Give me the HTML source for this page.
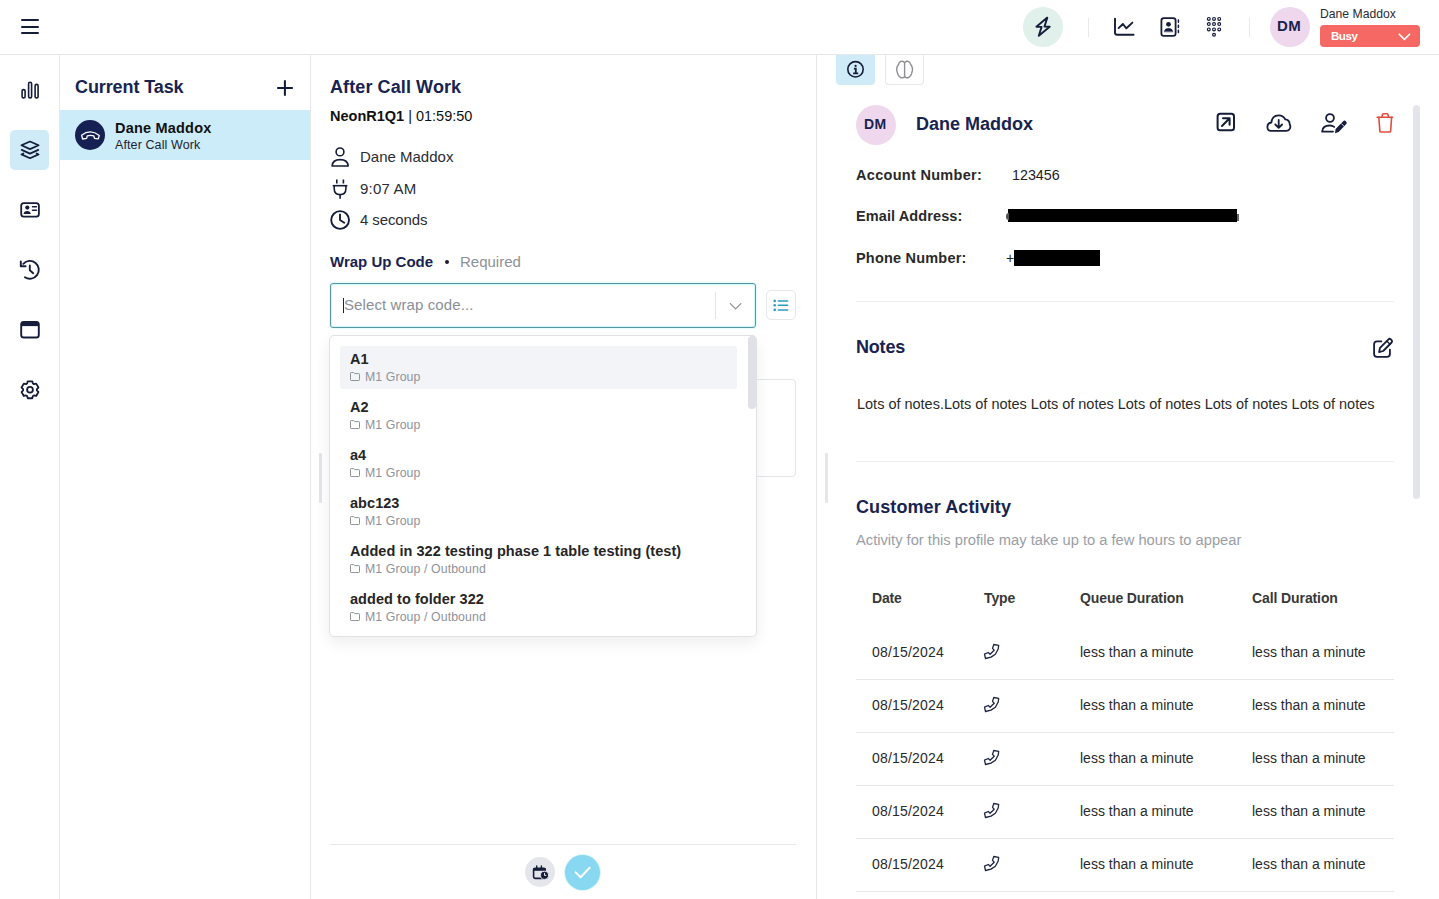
<!DOCTYPE html>
<html><head><meta charset="utf-8">
<style>
*{box-sizing:border-box;margin:0;padding:0}
html,body{width:1439px;height:899px;overflow:hidden;background:#fff;font-family:"Liberation Sans",sans-serif;color:#222}
.a{position:absolute}
.t{position:absolute;white-space:nowrap;line-height:1}
.nv{color:#182350}
svg{position:absolute;overflow:visible}
</style></head><body>

<!-- ===== TOP BAR ===== -->
<div class="a" style="left:0;top:54px;width:1439px;height:1px;background:#e6e7ea"></div>
<!-- hamburger -->
<div class="a" style="left:21px;top:19px;width:18px;height:2px;background:#161d3a;border-radius:1px"></div>
<div class="a" style="left:21px;top:26px;width:18px;height:2px;background:#161d3a;border-radius:1px"></div>
<div class="a" style="left:21px;top:32px;width:18px;height:2px;background:#161d3a;border-radius:1px"></div>


<!-- top bar right -->
<div class="a" style="left:1023px;top:7px;width:40px;height:40px;border-radius:50%;background:#dff1ea"></div>
<div class="a" style="left:1088px;top:18px;width:1px;height:19px;background:#e8e9ec"></div>
<div class="a" style="left:1249px;top:18px;width:1px;height:19px;background:#e8e9ec"></div>
<div class="a" style="left:1270px;top:7px;width:40px;height:40px;border-radius:50%;background:#efd8ee"></div>
<div class="t nv" style="left:1277px;top:18px;font-size:15px;font-weight:700;letter-spacing:0.4px">DM</div>
<div class="t" style="left:1320px;top:8px;font-size:12.2px;color:#2a2d35">Dane Maddox</div>
<div class="a" style="left:1320px;top:25px;width:100px;height:22px;border-radius:4px;background:#f56863"></div>
<div class="t" style="left:1331px;top:30px;font-size:11.6px;font-weight:700;color:#fff;letter-spacing:-0.5px">Busy</div>
<svg style="left:0;top:0" width="1439" height="60" viewBox="0 0 1439 60" fill="none" stroke-linecap="round" stroke-linejoin="round">
 <path d="M1047.3 17.6 L1036.4 26.7 L1041.6 26.9 L1038.8 35.8 L1049.7 26.7 L1044.5 26.5 Z" stroke="#161d3a" stroke-width="1.9"/>
 <path d="M1115 18.6 V32.4 Q1115 34.7 1117.3 34.7 H1133.6" stroke="#161d3a" stroke-width="1.9"/>
 <path d="M1118.6 28.1 L1122.9 24 L1126.4 28.3 L1132.4 22.6" stroke="#161d3a" stroke-width="1.9"/>
 <rect x="1161.4" y="18.1" width="14.2" height="17.8" rx="2.4" stroke="#161d3a" stroke-width="1.8"/>
 <circle cx="1168.5" cy="24.3" r="2.4" fill="#161d3a"/>
 <path d="M1164.3 31.5 Q1164.8 28.3 1168.5 28.3 Q1172.3 28.3 1172.8 31.5 Z" fill="#161d3a" stroke="#161d3a" stroke-width="0.5"/>
 <path d="M1178.4 20 V22.3 M1178.4 25.2 V27.5 M1178.4 30.2 V32.5" stroke="#161d3a" stroke-width="1.5"/>
 <g stroke="#161d3a" stroke-width="1.2">
  <circle cx="1208.8" cy="18.9" r="1.4"/><circle cx="1214" cy="18.9" r="1.4"/><circle cx="1219.2" cy="18.9" r="1.4"/>
  <circle cx="1208.8" cy="24.1" r="1.4"/><circle cx="1214" cy="24.1" r="1.4"/><circle cx="1219.2" cy="24.1" r="1.4"/>
  <circle cx="1208.8" cy="29.4" r="1.4"/><circle cx="1214" cy="29.4" r="1.4"/><circle cx="1219.2" cy="29.4" r="1.4"/>
  <circle cx="1214" cy="34.7" r="1.4"/>
 </g>
 <path d="M1399.2 34.2 L1404.4 39.4 L1409.6 34.2" stroke="#fff" stroke-width="1.6"/>
</svg>

<!-- ===== LEFT NAV ===== -->
<div class="a" style="left:59px;top:55px;width:1px;height:844px;background:#e6e7ea"></div>
<div class="a" style="left:10px;top:130px;width:39px;height:40px;background:#cfebf8;border-radius:5px"></div>

<!-- ===== TASK PANEL ===== -->
<div class="a" style="left:310px;top:55px;width:1px;height:844px;background:#e6e7ea"></div>
<div class="t nv" style="left:75px;top:78px;font-size:18px;font-weight:700;letter-spacing:-0.1px">Current Task</div>
<svg style="left:0;top:0" width="320" height="110" viewBox="0 0 320 110" fill="none"><path d="M284.9 80.2 V95.8 M277.2 88 H292.8" stroke="#0f1838" stroke-width="2"/></svg>
<div class="a" style="left:60px;top:110px;width:250px;height:50px;background:#cdecf9"></div>
<div class="a" style="left:75px;top:120px;width:30px;height:30px;border-radius:50%;background:#152153"></div>
<div class="t" style="left:115px;top:121px;font-size:14.5px;font-weight:700;color:#111;letter-spacing:0.2px">Dane Maddox</div>
<div class="t" style="left:115px;top:139px;font-size:12.5px;color:#1c2230;letter-spacing:0.1px">After Call Work</div>

<!-- ===== MIDDLE PANEL ===== -->
<div class="a" style="left:816px;top:55px;width:1px;height:844px;background:#e6e7ea"></div>
<div class="a" style="left:319px;top:453px;width:3px;height:50px;background:#e3e5ea;border-radius:1px"></div>
<div class="a" style="left:825px;top:453px;width:3px;height:50px;background:#e3e5ea;border-radius:1px"></div>

<div class="t nv" style="left:330px;top:78px;font-size:18px;font-weight:700;letter-spacing:0.1px">After Call Work</div>
<div class="t" style="left:330px;top:109px;font-size:14.5px;color:#111;letter-spacing:0px"><b>NeonR1Q1</b> | 01:59:50</div>

<div class="t" style="left:360px;top:149px;font-size:15px;color:#2a2d35">Dane Maddox</div>
<div class="t" style="left:360px;top:181px;font-size:15px;color:#2a2d35;letter-spacing:0.2px">9:07 AM</div>
<div class="t" style="left:360px;top:212px;font-size:15px;color:#2a2d35;letter-spacing:-0.1px">4 seconds</div>

<div class="t nv" style="left:330px;top:254px;font-size:15px;font-weight:700">Wrap Up Code</div>
<div class="a" style="left:445px;top:260px;width:4px;height:4px;border-radius:50%;background:#1a1d2a"></div>
<div class="t" style="left:460px;top:254px;font-size:15px;color:#8d9199">Required</div>

<!-- notes textarea (behind dropdown) -->
<div class="a" style="left:330px;top:379px;width:466px;height:98px;border:1px solid #e4e6ea;border-radius:4px"></div>

<!-- input -->
<div class="a" style="left:330px;top:283px;width:426px;height:45px;border:1px solid #5a949f;border-radius:3px;box-shadow:inset 0 0 0 1px rgba(195,248,255,0.9),0 0 0 1px rgba(215,250,255,0.6)"></div>
<div class="a" style="left:343px;top:298px;width:1px;height:15px;background:#222"></div>
<div class="t" style="left:344px;top:297px;font-size:15px;color:#8a8f96;letter-spacing:0.1px">Select wrap code...</div>
<div class="a" style="left:715px;top:292px;width:1px;height:27px;background:#e3e4e7"></div>
<div class="a" style="left:766px;top:290px;width:30px;height:30px;border:1px solid #e6e7ea;border-radius:5px"></div>

<!-- dropdown -->
<div class="a" style="left:329px;top:335px;width:428px;height:302px;border:1px solid #e0e1e4;border-radius:5px;background:#fff;box-shadow:0 6px 16px rgba(0,0,0,0.07)"></div>
<div class="a" style="left:748px;top:336px;width:8px;height:73px;background:#dfe1e6;border-radius:4px"></div>
<div class="a" style="left:340px;top:346px;width:397px;height:43px;background:#f3f4f8;border-radius:3px"></div>

<div class="t" style="left:350px;top:352px;font-size:14.5px;font-weight:700;color:#262626;letter-spacing:0.05px">A1</div>
<svg style="left:350px;top:372px" width="10" height="9" viewBox="0 0 10 9"><path d="M0.5 1.2 Q0.5 0.5 1.2 0.5 H3.6 L4.6 1.6 H8.8 Q9.5 1.6 9.5 2.3 V7.8 Q9.5 8.5 8.8 8.5 H1.2 Q0.5 8.5 0.5 7.8 Z" fill="none" stroke="#8f939a" stroke-width="1"/></svg>
<div class="t" style="left:365px;top:371px;font-size:12.3px;color:#8f939a;letter-spacing:0.1px">M1 Group</div>
<div class="t" style="left:350px;top:400px;font-size:14.5px;font-weight:700;color:#262626;letter-spacing:0.05px">A2</div>
<svg style="left:350px;top:420px" width="10" height="9" viewBox="0 0 10 9"><path d="M0.5 1.2 Q0.5 0.5 1.2 0.5 H3.6 L4.6 1.6 H8.8 Q9.5 1.6 9.5 2.3 V7.8 Q9.5 8.5 8.8 8.5 H1.2 Q0.5 8.5 0.5 7.8 Z" fill="none" stroke="#8f939a" stroke-width="1"/></svg>
<div class="t" style="left:365px;top:419px;font-size:12.3px;color:#8f939a;letter-spacing:0.1px">M1 Group</div>
<div class="t" style="left:350px;top:448px;font-size:14.5px;font-weight:700;color:#262626;letter-spacing:0.05px">a4</div>
<svg style="left:350px;top:468px" width="10" height="9" viewBox="0 0 10 9"><path d="M0.5 1.2 Q0.5 0.5 1.2 0.5 H3.6 L4.6 1.6 H8.8 Q9.5 1.6 9.5 2.3 V7.8 Q9.5 8.5 8.8 8.5 H1.2 Q0.5 8.5 0.5 7.8 Z" fill="none" stroke="#8f939a" stroke-width="1"/></svg>
<div class="t" style="left:365px;top:467px;font-size:12.3px;color:#8f939a;letter-spacing:0.1px">M1 Group</div>
<div class="t" style="left:350px;top:496px;font-size:14.5px;font-weight:700;color:#262626;letter-spacing:0.05px">abc123</div>
<svg style="left:350px;top:516px" width="10" height="9" viewBox="0 0 10 9"><path d="M0.5 1.2 Q0.5 0.5 1.2 0.5 H3.6 L4.6 1.6 H8.8 Q9.5 1.6 9.5 2.3 V7.8 Q9.5 8.5 8.8 8.5 H1.2 Q0.5 8.5 0.5 7.8 Z" fill="none" stroke="#8f939a" stroke-width="1"/></svg>
<div class="t" style="left:365px;top:515px;font-size:12.3px;color:#8f939a;letter-spacing:0.1px">M1 Group</div>
<div class="t" style="left:350px;top:544px;font-size:14.5px;font-weight:700;color:#262626;letter-spacing:0.05px">Added in 322 testing phase 1 table testing (test)</div>
<svg style="left:350px;top:564px" width="10" height="9" viewBox="0 0 10 9"><path d="M0.5 1.2 Q0.5 0.5 1.2 0.5 H3.6 L4.6 1.6 H8.8 Q9.5 1.6 9.5 2.3 V7.8 Q9.5 8.5 8.8 8.5 H1.2 Q0.5 8.5 0.5 7.8 Z" fill="none" stroke="#8f939a" stroke-width="1"/></svg>
<div class="t" style="left:365px;top:563px;font-size:12.3px;color:#8f939a;letter-spacing:0.1px">M1 Group / Outbound</div>
<div class="t" style="left:350px;top:592px;font-size:14.5px;font-weight:700;color:#262626;letter-spacing:0.05px">added to folder 322</div>
<svg style="left:350px;top:612px" width="10" height="9" viewBox="0 0 10 9"><path d="M0.5 1.2 Q0.5 0.5 1.2 0.5 H3.6 L4.6 1.6 H8.8 Q9.5 1.6 9.5 2.3 V7.8 Q9.5 8.5 8.8 8.5 H1.2 Q0.5 8.5 0.5 7.8 Z" fill="none" stroke="#8f939a" stroke-width="1"/></svg>
<div class="t" style="left:365px;top:611px;font-size:12.3px;color:#8f939a;letter-spacing:0.1px">M1 Group / Outbound</div>

<!-- bottom -->
<div class="a" style="left:330px;top:844px;width:466px;height:1px;background:#e6e7ea"></div>
<div class="a" style="left:525px;top:857px;width:30px;height:30px;border-radius:50%;background:#e4e6eb"></div>
<div class="a" style="left:565px;top:855px;width:35px;height:35px;border-radius:50%;background:#87d8f0;box-shadow:0 0 0 1px rgba(150,230,250,0.35)"></div>

<!-- ===== RIGHT PANEL ===== -->
<div class="a" style="left:836px;top:55px;width:39px;height:29.5px;background:#cfebf8;border-radius:0 0 4px 4px"></div>
<div class="a" style="left:885px;top:54px;width:39px;height:31px;border:1px solid #e6e7ea;border-top:none;border-radius:0 0 4px 4px"></div>

<div class="a" style="left:856px;top:105px;width:40px;height:40px;border-radius:50%;background:#efd8ee"></div>
<div class="t nv" style="left:864px;top:117px;font-size:14px;font-weight:700;letter-spacing:0.3px">DM</div>
<div class="t nv" style="left:916px;top:115px;font-size:18px;font-weight:700">Dane Maddox</div>

<div class="a" style="left:1413px;top:105px;width:7px;height:394px;background:#e3e5ea;border-radius:4px"></div>

<div class="t" style="left:856px;top:168px;font-size:14.5px;font-weight:700;color:#2a2a2a;letter-spacing:0.3px">Account Number:</div>
<div class="t" style="left:1012px;top:168px;font-size:14.3px;color:#222">123456</div>
<div class="t" style="left:856px;top:209px;font-size:14.5px;font-weight:700;color:#2a2a2a;letter-spacing:0.1px">Email Address:</div>
<div class="a" style="left:1008px;top:209px;width:229px;height:13px;background:#000"></div>
<div class="a" style="left:1006px;top:213px;width:3px;height:7px;border-radius:3px 0 0 3px;background:#555"></div>
<div class="a" style="left:1237px;top:214px;width:2px;height:7px;background:#666"></div>
<div class="t" style="left:856px;top:251px;font-size:14.5px;font-weight:700;color:#2a2a2a;letter-spacing:0.2px">Phone Number:</div>
<div class="t" style="left:1006px;top:251px;font-size:14px;color:#222">+</div>
<div class="a" style="left:1014px;top:250px;width:86px;height:16px;background:#000"></div>

<div class="a" style="left:856px;top:301px;width:538px;height:1px;background:#eceef0"></div>
<div class="t nv" style="left:856px;top:338px;font-size:18px;font-weight:700;letter-spacing:-0.2px">Notes</div>
<div class="t" style="left:857px;top:397px;font-size:14.5px;color:#2a2a2a;letter-spacing:-0.01px">Lots of notes.Lots of notes Lots of notes Lots of notes Lots of notes Lots of notes</div>
<div class="a" style="left:856px;top:461px;width:538px;height:1px;background:#eceef0"></div>

<div class="t nv" style="left:856px;top:498px;font-size:18px;font-weight:700;letter-spacing:0.1px">Customer Activity</div>
<div class="t" style="left:856px;top:533px;font-size:14.7px;color:#9a9ea6">Activity for this profile may take up to a few hours to appear</div>

<div class="t" style="left:872px;top:591px;font-size:14px;font-weight:700;color:#383838;letter-spacing:-0.2px">Date</div>
<div class="t" style="left:984px;top:591px;font-size:14px;font-weight:700;color:#383838;letter-spacing:-0.1px">Type</div>
<div class="t" style="left:1080px;top:591px;font-size:14px;font-weight:700;color:#383838;letter-spacing:-0.1px">Queue Duration</div>
<div class="t" style="left:1252px;top:591px;font-size:14px;font-weight:700;color:#383838;letter-spacing:-0.1px">Call Duration</div>
<div class="t" style="left:872px;top:645px;font-size:14px;color:#2a2a2a;letter-spacing:0.2px">08/15/2024</div>
<svg class="ph" style="left:984px;top:644px" width="16" height="16" viewBox="0 0 16 16"><path d="M9.8 0.5 L14.7 1.4 L14.2 5.0 L11.4 10.2 L7.0 13.1 L1.5 14.5 L0.5 10.2 L4.3 8.5 L6.1 10.2 L10.2 6.2 L8.5 4.4 Z" fill="none" stroke="#1e2545" stroke-width="1.3" stroke-linejoin="round"/></svg>
<div class="t" style="left:1080px;top:645px;font-size:14px;color:#2a2a2a">less than a minute</div>
<div class="t" style="left:1252px;top:645px;font-size:14px;color:#2a2a2a">less than a minute</div>
<div class="a" style="left:856px;top:679px;width:538px;height:1px;background:#e6e7ea"></div>
<div class="t" style="left:872px;top:698px;font-size:14px;color:#2a2a2a;letter-spacing:0.2px">08/15/2024</div>
<svg class="ph" style="left:984px;top:697px" width="16" height="16" viewBox="0 0 16 16"><path d="M9.8 0.5 L14.7 1.4 L14.2 5.0 L11.4 10.2 L7.0 13.1 L1.5 14.5 L0.5 10.2 L4.3 8.5 L6.1 10.2 L10.2 6.2 L8.5 4.4 Z" fill="none" stroke="#1e2545" stroke-width="1.3" stroke-linejoin="round"/></svg>
<div class="t" style="left:1080px;top:698px;font-size:14px;color:#2a2a2a">less than a minute</div>
<div class="t" style="left:1252px;top:698px;font-size:14px;color:#2a2a2a">less than a minute</div>
<div class="a" style="left:856px;top:732px;width:538px;height:1px;background:#e6e7ea"></div>
<div class="t" style="left:872px;top:751px;font-size:14px;color:#2a2a2a;letter-spacing:0.2px">08/15/2024</div>
<svg class="ph" style="left:984px;top:750px" width="16" height="16" viewBox="0 0 16 16"><path d="M9.8 0.5 L14.7 1.4 L14.2 5.0 L11.4 10.2 L7.0 13.1 L1.5 14.5 L0.5 10.2 L4.3 8.5 L6.1 10.2 L10.2 6.2 L8.5 4.4 Z" fill="none" stroke="#1e2545" stroke-width="1.3" stroke-linejoin="round"/></svg>
<div class="t" style="left:1080px;top:751px;font-size:14px;color:#2a2a2a">less than a minute</div>
<div class="t" style="left:1252px;top:751px;font-size:14px;color:#2a2a2a">less than a minute</div>
<div class="a" style="left:856px;top:785px;width:538px;height:1px;background:#e6e7ea"></div>
<div class="t" style="left:872px;top:804px;font-size:14px;color:#2a2a2a;letter-spacing:0.2px">08/15/2024</div>
<svg class="ph" style="left:984px;top:803px" width="16" height="16" viewBox="0 0 16 16"><path d="M9.8 0.5 L14.7 1.4 L14.2 5.0 L11.4 10.2 L7.0 13.1 L1.5 14.5 L0.5 10.2 L4.3 8.5 L6.1 10.2 L10.2 6.2 L8.5 4.4 Z" fill="none" stroke="#1e2545" stroke-width="1.3" stroke-linejoin="round"/></svg>
<div class="t" style="left:1080px;top:804px;font-size:14px;color:#2a2a2a">less than a minute</div>
<div class="t" style="left:1252px;top:804px;font-size:14px;color:#2a2a2a">less than a minute</div>
<div class="a" style="left:856px;top:838px;width:538px;height:1px;background:#e6e7ea"></div>
<div class="t" style="left:872px;top:857px;font-size:14px;color:#2a2a2a;letter-spacing:0.2px">08/15/2024</div>
<svg class="ph" style="left:984px;top:856px" width="16" height="16" viewBox="0 0 16 16"><path d="M9.8 0.5 L14.7 1.4 L14.2 5.0 L11.4 10.2 L7.0 13.1 L1.5 14.5 L0.5 10.2 L4.3 8.5 L6.1 10.2 L10.2 6.2 L8.5 4.4 Z" fill="none" stroke="#1e2545" stroke-width="1.3" stroke-linejoin="round"/></svg>
<div class="t" style="left:1080px;top:857px;font-size:14px;color:#2a2a2a">less than a minute</div>
<div class="t" style="left:1252px;top:857px;font-size:14px;color:#2a2a2a">less than a minute</div>
<div class="a" style="left:856px;top:891px;width:538px;height:1px;background:#e6e7ea"></div>


<!-- ===== ICONS ===== -->
<svg style="left:0;top:0" width="1439" height="899" viewBox="0 0 1439 899" fill="none" stroke-linecap="round" stroke-linejoin="round">
 <!-- nav: bar chart -->
 <g stroke="#161d3a" stroke-width="1.6">
  <rect x="22.1" y="89.6" width="3" height="8.3" rx="1.5"/>
  <rect x="28.6" y="82.2" width="3" height="15.7" rx="1.5"/>
  <rect x="35.1" y="84.4" width="3" height="13.5" rx="1.5"/>
 </g>
 <!-- nav: layers -->
 <g stroke="#161d3a" stroke-width="1.7">
  <path d="M21.4 145.3 L30 141.5 L38.6 145.3 L30 149.1 Z"/>
  <path d="M21.7 149.9 L30 153.6 L38.3 149.9"/>
  <path d="M23.4 153.4 L21.4 154.4 L30 158.2 L38.6 154.4 L36.6 153.4"/>
 </g>
 <!-- nav: id card -->
 <rect x="21.2" y="203.1" width="17.7" height="13.6" rx="2.6" stroke="#161d3a" stroke-width="1.8"/>
 <circle cx="27.3" cy="207.6" r="2.1" fill="#161d3a"/>
 <path d="M23.5 214.1 Q23.9 210.9 27.1 210.9 Q30.4 210.9 30.8 214.1 Z" fill="#161d3a"/>
 <path d="M32.6 206.7 H36.4 M32.6 210.3 H36.4" stroke="#161d3a" stroke-width="1.6"/>
 <!-- nav: history -->
 <g stroke="#161d3a" stroke-width="1.9">
  <path d="M23.29 263.84 A8.9 8.9 0 1 1 24.92 277.18"/>
  <path d="M20.8 261.5 V266.3 H25.6"/>
  <path d="M29.8 265.5 V270.2 L33.2 273.2"/>
 </g>
 <!-- nav: window -->
 <rect x="21.2" y="321.9" width="17.6" height="15.6" rx="2.6" stroke="#161d3a" stroke-width="1.9"/>
 <rect x="21.2" y="321.9" width="17.6" height="4.2" fill="#161d3a"/>
 <!-- nav: gear -->
 <g transform="translate(20,379.8)" stroke="#161d3a" stroke-width="1.8">
  <path d="M7.08 3.75 L7.74 1.55 L12.26 1.55 L12.92 3.75 L13.96 4.35 L16.19 3.81 L18.45 7.74 L16.87 9.40 L16.87 10.60 L18.45 12.26 L16.19 16.19 L13.96 15.65 L12.92 16.25 L12.26 18.45 L7.74 18.45 L7.08 16.25 L6.04 15.65 L3.81 16.19 L1.55 12.26 L3.13 10.60 L3.13 9.40 L1.55 7.74 L3.81 3.81 L6.04 4.35 Z"/>
  <circle cx="10" cy="10" r="2.9"/>
 </g>

 <!-- task hangup -->
 <path d="M81.6 135.2 Q90.3 128.6 99.3 135.4 L98.3 138.9 L94.5 138.3 L93.8 135.9 Q90.5 134.8 87.3 135.9 L86.6 138.4 L82.6 139 Z" stroke="#fff" stroke-width="1.3"/>

 <!-- middle: person -->
 <g stroke="#161d3a" stroke-width="1.6">
  <circle cx="340" cy="151.9" r="3.9"/>
  <path d="M332.1 166 Q332.5 159.6 340.1 159.6 Q347.8 159.6 348.2 166 Z"/>
 </g>
 <!-- plug -->
 <g stroke="#161d3a" stroke-width="1.6" stroke-linecap="butt">
  <path d="M336.8 179.5 V183.5 M343.4 179.5 V183.5"/>
  <path d="M332.7 185.7 H347.4"/>
  <path d="M334.2 185.7 V188.5 Q334.2 194.6 340.1 194.6 Q345.9 194.6 345.9 188.5 V185.7"/>
  <path d="M340.1 194.6 V198.7"/>
 </g>
 <!-- clock -->
 <g stroke="#161d3a" stroke-width="1.9">
  <circle cx="340.1" cy="220" r="8.9"/>
  <path d="M340 214.4 V220 L344.2 222.7"/>
 </g>

 <!-- input chevron -->
 <path d="M730.3 303.6 L735.6 308.9 L740.9 303.6" stroke="#8a8c90" stroke-width="1.2"/>
 <!-- list icon -->
 <g fill="#2c9ec4"><circle cx="774.7" cy="300.9" r="1.3"/><circle cx="774.7" cy="305.3" r="1.3"/><circle cx="774.7" cy="309.9" r="1.3"/></g>
 <path d="M778.3 300.9 H787.7 M778.3 305.3 H787.7 M778.3 309.9 H787.7" stroke="#2c9ec4" stroke-width="1.5"/>

 <!-- calendar clock -->
 <g>
  <rect x="533.6" y="868.2" width="11.6" height="10.2" rx="1.6" stroke="#161d3a" stroke-width="1.6"/>
  <rect x="533.2" y="868" width="12.4" height="2.8" fill="#161d3a"/>
  <path d="M536.7 866 V868.6 M541.4 866 V868.6" stroke="#161d3a" stroke-width="1.4"/>
  <circle cx="544.6" cy="875.3" r="4.1" fill="#161d3a" stroke="#e4e6eb" stroke-width="1"/>
  <path d="M544.5 873.3 V875.4 H546" stroke="#fff" stroke-width="0.9"/>
 </g>
 <!-- check -->
 <path d="M575.6 872.4 L580.6 877.2 L589.6 867.8" stroke="#fff" stroke-width="2"/>

 <!-- info -->
 <circle cx="855.5" cy="69.3" r="7.7" stroke="#161d3a" stroke-width="1.6"/>
 <circle cx="855.6" cy="65.9" r="1.15" fill="#161d3a"/>
 <path d="M853.9 68.7 H855.8 V73.3 M853.1 73.3 H858.2" stroke="#161d3a" stroke-width="1.8" stroke-linecap="butt" stroke-linejoin="miter"/>
 <!-- brain -->
 <g stroke="#8d8f93" stroke-width="1.4">
  <path d="M904.60 62.60 C904.22 62.37 903.13 61.27 902.30 61.20 C901.47 61.13 900.22 61.67 899.60 62.20 C898.98 62.73 898.98 63.67 898.60 64.40 C898.22 65.13 897.62 65.70 897.30 66.60 C896.98 67.50 896.68 68.80 896.70 69.80 C896.72 70.80 897.13 71.70 897.40 72.60 C897.67 73.50 897.77 74.38 898.30 75.20 C898.83 76.02 899.77 77.10 900.60 77.50 C901.43 77.90 902.63 77.77 903.30 77.60 C903.97 77.43 904.38 76.68 904.60 76.50"/>
  <path d="M904.60 62.60 C904.98 62.37 906.07 61.27 906.90 61.20 C907.73 61.13 908.98 61.67 909.60 62.20 C910.22 62.73 910.22 63.67 910.60 64.40 C910.98 65.13 911.58 65.70 911.90 66.60 C912.22 67.50 912.52 68.80 912.50 69.80 C912.48 70.80 912.07 71.70 911.80 72.60 C911.53 73.50 911.43 74.38 910.90 75.20 C910.37 76.02 909.43 77.10 908.60 77.50 C907.77 77.90 906.57 77.77 905.90 77.60 C905.23 77.43 904.82 76.68 904.60 76.50"/>
  <path d="M904.6 62.6 V76.5"/>
 </g>

 <!-- external link -->
 <g stroke="#161d3a" stroke-width="2">
  <rect x="1217.6" y="113.8" width="16.4" height="16.5" rx="2.6"/>
  <path d="M1222 126 L1229.3 118.5 M1223 118.2 H1229.6 V124.8"/>
 </g>
 <!-- cloud download -->
 <g stroke="#161d3a" stroke-width="1.8">
  <path d="M1271 130.9 Q1267.4 130.9 1267.4 127 Q1267.4 123 1271.4 122.5 Q1272.2 115.3 1278.6 115.3 Q1283.6 115.3 1285.2 119.4 Q1289.4 119.7 1289.7 124.3 Q1290.9 126.3 1289.9 128.7 Q1288.9 130.9 1286.3 130.9 Z"/>
  <path d="M1278.7 119.9 V127.7 M1275.3 124.5 L1278.7 127.9 L1282.1 124.5"/>
 </g>
 <!-- user edit -->
 <g stroke="#161d3a" stroke-width="1.8">
  <circle cx="1330" cy="118" r="3.9"/>
  <path d="M1334.2 126.9 Q1332.4 125.5 1329.8 125.5 Q1322.5 125.5 1322.1 131.6 H1333"/>
 </g>
 <path d="M1335 133.2 L1335.6 128.9 L1343.2 121.3 Q1344.6 119.9 1346.1 121.4 Q1347.5 122.9 1346.1 124.3 L1338.6 131.9 Z" fill="#161d3a"/>
 <path d="M1341.6 123.8 L1344 126.2" stroke="#fff" stroke-width="0.8"/>
 <!-- trash -->
 <g stroke="#e14c3d" stroke-width="1.6">
  <path d="M1377.2 117.2 H1392.6"/>
  <path d="M1381.9 117 L1382.5 114.5 Q1382.8 113.8 1383.6 113.8 H1386.8 Q1387.6 113.8 1387.9 114.5 L1388.5 117"/>
  <path d="M1378.8 117.4 L1379.9 131.3 Q1380 132 1380.7 132 H1389.8 Q1390.5 132 1390.6 131.3 L1391.6 117.4"/>
 </g>
 <!-- notes edit -->
 <g stroke="#161d3a" stroke-width="1.8">
  <path d="M1381.3 341.4 H1377 Q1374.1 341.4 1374.1 344.3 V354 Q1374.1 356.9 1377 356.9 H1387 Q1389.9 356.9 1389.9 354 V349.6"/>
  <path d="M1379.1 352.1 L1380 347.8 L1388.5 339.3 Q1389.6 338.2 1390.8 339.4 L1391.6 340.2 Q1392.7 341.4 1391.6 342.5 L1383.2 351 Z"/>
  <path d="M1386.8 341 L1390 344.2" stroke-width="1.4"/>
 </g>
</svg>

</body></html>
